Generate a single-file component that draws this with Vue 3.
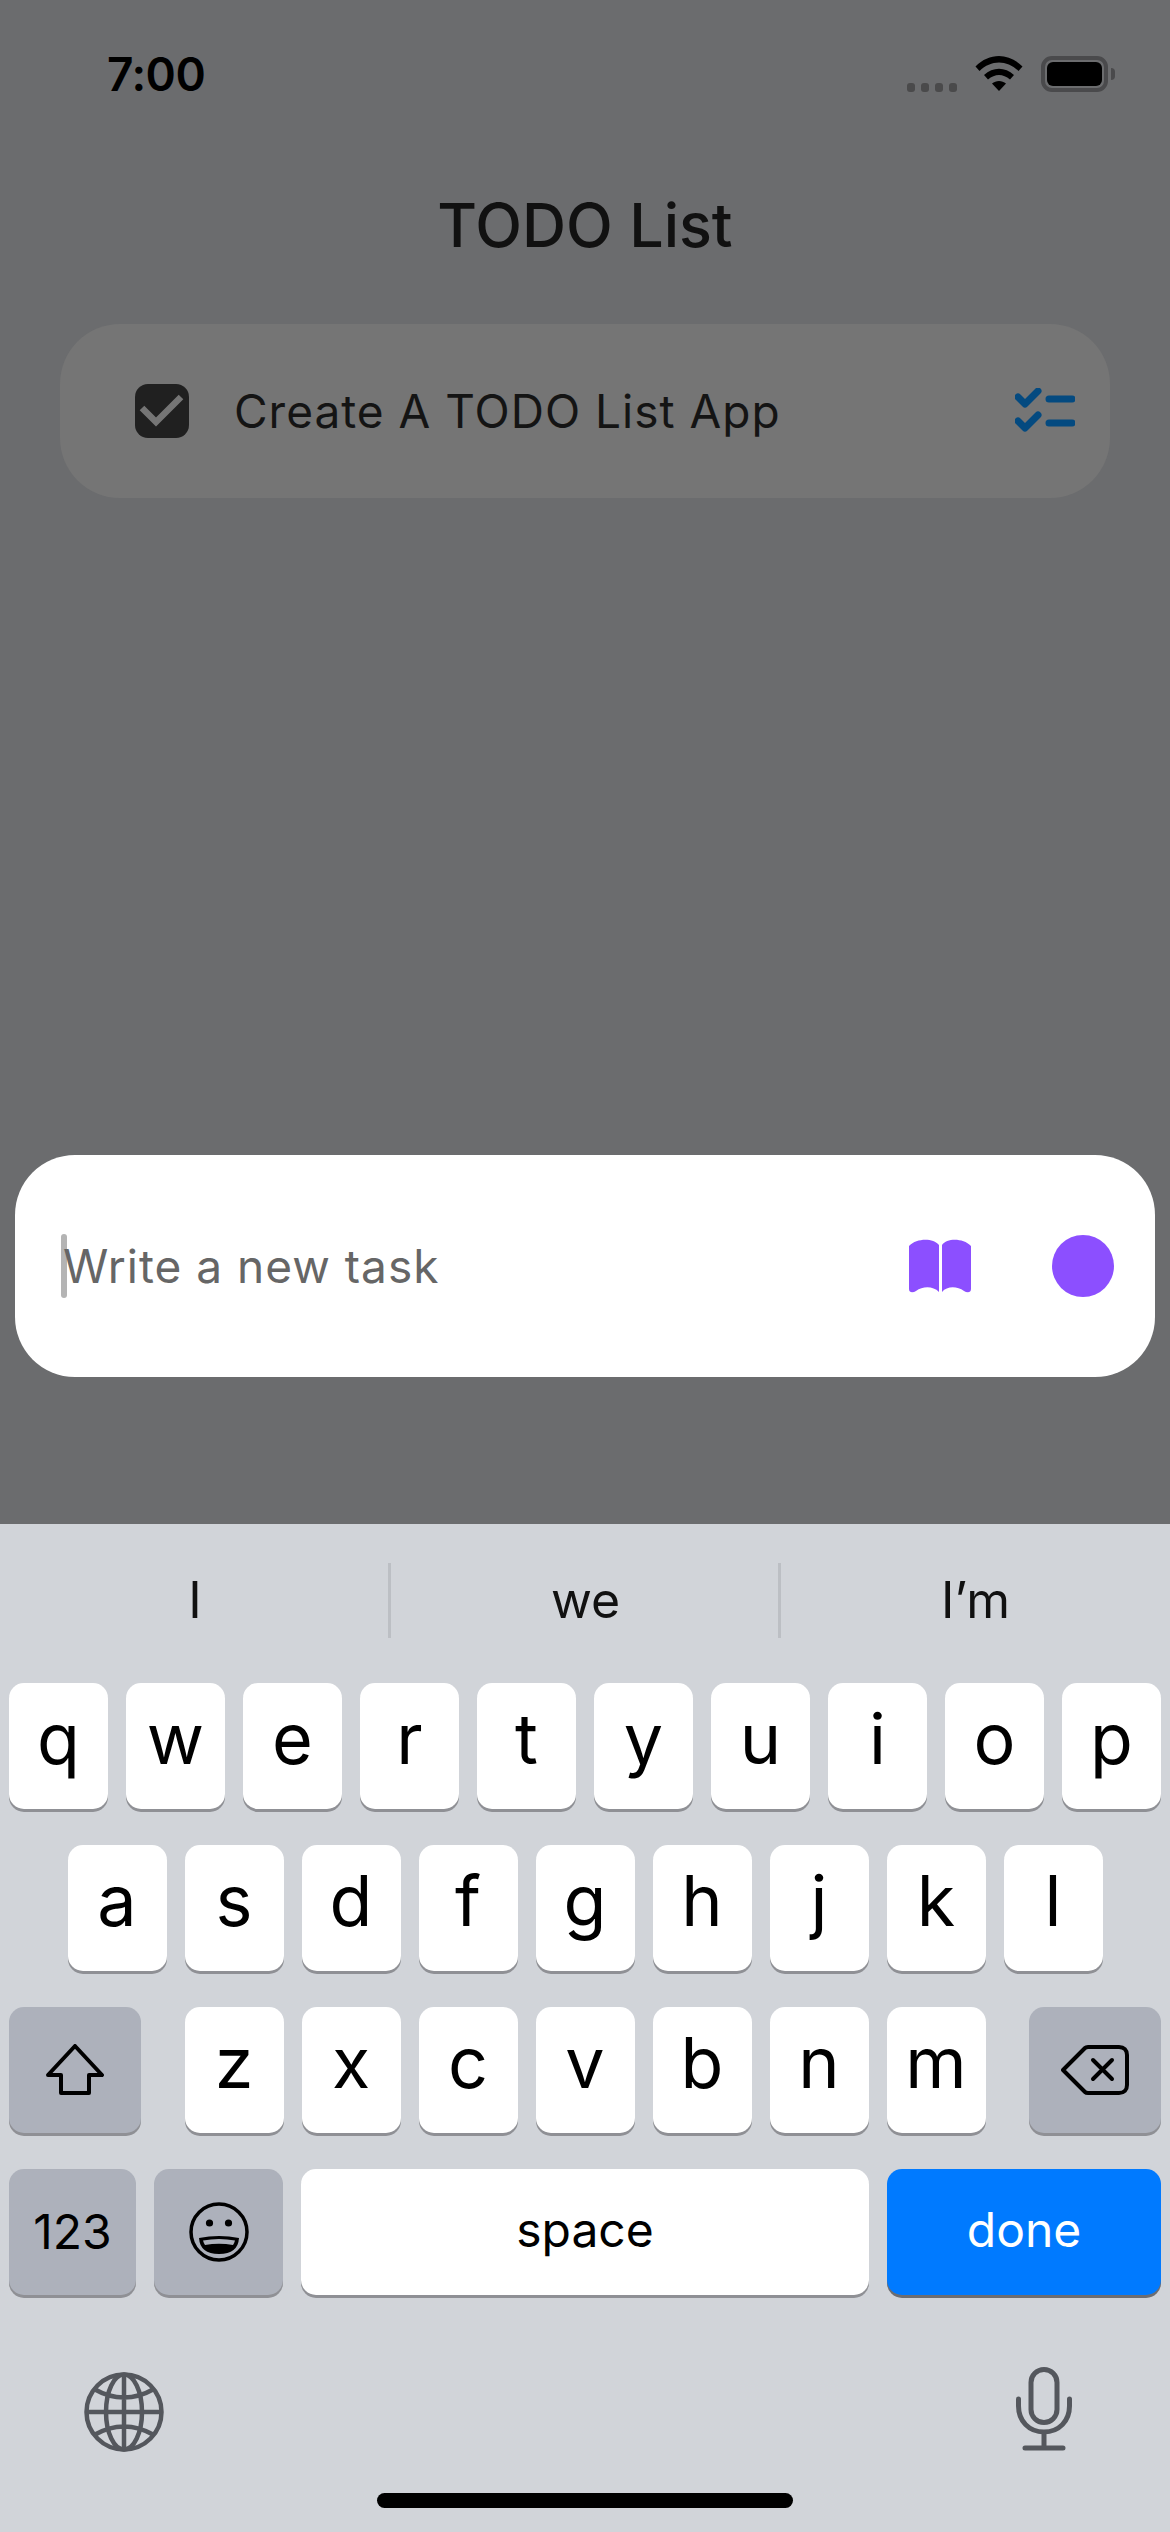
<script setup>
const row1 = ['q','w','e','r','t','y','u','i','o','p']
const row2 = ['a','s','d','f','g','h','j','k','l']
const row3 = ['z','x','c','v','b','n','m']
const suggestions = ['I','we','I’m']
</script>

<template>
  <div class="screen">
    <div class="app">
      <div class="status">
        <span class="time">7:00</span>
        <div class="status-icons">
          <div class="signal"><i></i><i></i><i></i><i></i></div>
          <svg class="wifi" width="48" height="36" viewBox="0 0 48 36">
            <path d="M0.5 11.5C14 -2.5 34 -2.5 47.5 11.5L43.5 16C32 4.5 16 4.5 4.5 16Z" fill="#000"/>
            <path d="M9 20C18 11.5 30 11.5 39 20L35 24.5C28 18.5 20 18.5 13 24.5Z" fill="#000"/>
            <path d="M17 28.5C21 25 27 25 31 28.5L24 36Z" fill="#000"/>
          </svg>
          <div class="battery"><div class="level"></div></div>
          <div class="nub"></div>
        </div>
      </div>
      <h1 class="title">TODO List</h1>
      <div class="task">
        <svg class="check" width="54" height="54" viewBox="0 0 54 54">
          <rect width="54" height="54" rx="13" fill="#202020"/>
          <path d="M7 24L21 38L46 13" fill="none" stroke="#757575" stroke-width="6.5"/>
        </svg>
        <span class="task-text">Create A TODO List App</span>
        <svg class="list-icon" width="60" height="44" viewBox="0 0 60 44">
          <path d="M3 9L10 16L23 3M3 33L10 40L23 27M34 11H57M34 35H57" fill="none" stroke="#044a80" stroke-width="7" stroke-linecap="round" stroke-linejoin="round"/>
        </svg>
      </div>
      <div class="spacer"></div>
      <div class="composer">
        <div class="field">
          <span class="caret"></span>
          <span class="placeholder">Write a new task</span>
        </div>
        <svg class="book" width="62" height="54" viewBox="0 0 62 54">
          <path d="M0 7C8 -1 24 -1 30 6V53C24 47 14 47 7 52C4 54 0 54 0 50Z" fill="#8c4fff"/>
          <path d="M62 7C54 -1 38 -1 33 6V53C38 47 48 47 55 52C58 54 62 54 62 50Z" fill="#8c4fff"/>
        </svg>
        <span class="record"></span>
      </div>
    </div>

    <div class="keyboard">
      <div class="suggestions">
        <span v-for="s in suggestions" :key="s" class="suggestion">{{ s }}</span>
      </div>
      <div class="rows">
        <div class="row">
          <button v-for="k in row1" :key="k" class="key letter">{{ k }}</button>
        </div>
        <div class="row">
          <button v-for="k in row2" :key="k" class="key letter">{{ k }}</button>
        </div>
        <div class="row between">
          <button class="key dark wide" aria-label="shift">
            <svg width="60" height="52" viewBox="0 0 60 52">
              <path d="M30 2L57 31H44V49H16V31H3Z" fill="none" stroke="#000" stroke-width="4" stroke-linejoin="round"/>
            </svg>
          </button>
          <div class="row">
            <button v-for="k in row3" :key="k" class="key letter">{{ k }}</button>
          </div>
          <button class="key dark wide" aria-label="delete">
            <svg width="68" height="50" viewBox="0 0 68 50">
              <path d="M2 25L24 3C25 2 26 2 27 2H58C63 2 66 5 66 10V40C66 45 63 48 58 48H27C26 48 25 48 24 47Z" fill="none" stroke="#000" stroke-width="4" stroke-linejoin="round"/>
              <path d="M32 15L51 34M51 15L32 34" fill="none" stroke="#000" stroke-width="4" stroke-linecap="round"/>
            </svg>
          </button>
        </div>
        <div class="row">
          <button class="key dark small num">123</button>
          <button class="key dark emoji" aria-label="emoji">
            <svg width="60" height="60" viewBox="0 0 60 60">
              <circle cx="30" cy="30" r="28" fill="none" stroke="#000" stroke-width="3.5"/>
              <circle cx="20.5" cy="21" r="3.6" fill="#000"/>
              <circle cx="39.5" cy="21" r="3.6" fill="#000"/>
              <path d="M10 36Q30 32 50 36Q49 52 30 52Q11 52 10 36Z" fill="#000"/>
              <path d="M14 38.5Q30 35.5 46 38.5Q45 42 44 43Q30 40.5 16 43Q15 42 14 38.5Z" fill="#adb1bb"/>
            </svg>
          </button>
          <button class="key space">space</button>
          <button class="key done">done</button>
        </div>
      </div>
      <div class="foot">
        <svg class="globe" width="80" height="80" viewBox="0 0 80 80" fill="none" stroke="#54575d" stroke-width="4.5">
          <circle cx="40" cy="40" r="37.5"/>
          <ellipse cx="40" cy="40" rx="18" ry="37.5"/>
          <path d="M40 2.5V77.5M2.5 40H77.5M10 17Q40 34 70 17M10 63Q40 46 70 63"/>
        </svg>
        <svg class="mic" width="56" height="84" viewBox="0 0 56 84" fill="none" stroke="#54575d" stroke-width="5" stroke-linecap="round">
          <rect x="15" y="2.5" width="26" height="53" rx="13"/>
          <path d="M2.5 32V39C2.5 54 13 65 28 65C43 65 53.5 54 53.5 39V32M28 65V81M9 81H47"/>
        </svg>
      </div>
      <div class="home"></div>
    </div>
  </div>
</template>

<style scoped>
.screen {
  width: 1170px;
  height: 2532px;
  display: flex;
  flex-direction: column;
  overflow: hidden;
  font-family: Inter, "Liberation Sans", sans-serif;
}
.app {
  height: 1524px;
  flex: none;
  background: #6b6c6e;
  display: flex;
  flex-direction: column;
}
.status {
  height: 92px;
  padding: 56px 55px 0 107px;
  display: flex;
  justify-content: space-between;
  align-items: flex-start;
  flex: none;
}
.time {
  font-size: 46px;
  font-weight: 600;
  line-height: 36px;
  letter-spacing: -0.5px;
  color: #000;
}
.status-icons {
  display: flex;
  align-items: flex-start;
}
.signal {
  display: flex;
  gap: 6px;
  margin: 27px 18px 0 0;
}
.signal i {
  width: 8px;
  height: 9px;
  border-radius: 3px;
  background: #4a4a4b;
}
.wifi {
  margin-top: -1px;
}
.battery {
  width: 67px;
  height: 36px;
  box-sizing: border-box;
  margin-left: 18px;
  padding: 2px;
  border: 4px solid #4a4a4c;
  border-radius: 11px;
}
.level {
  width: 100%;
  height: 100%;
  background: #000;
  border-radius: 6px;
}
.nub {
  width: 4px;
  height: 12px;
  margin: 12px 0 0 3px;
  background: #4a4a4c;
  border-radius: 0 6px 6px 0;
}
.title {
  margin: 0;
  height: 176px;
  font-size: 61px;
  font-weight: 500;
  line-height: 154px;
  text-align: center;
  color: #111;
}
.task {
  height: 174px;
  margin: 0 60px;
  padding: 0 35px 0 75px;
  box-sizing: border-box;
  display: flex;
  align-items: center;
  background: #757575;
  border-radius: 60px;
  flex: none;
}
.task-text {
  margin-left: 45px;
  flex: 1;
  font-size: 46px;
  letter-spacing: 1px;
  color: #141414;
}
.list-icon {
  margin-top: -3px;
}
.spacer {
  flex: 1;
}
.composer {
  height: 222px;
  margin: 0 15px 147px;
  padding: 0 41px 0 46px;
  box-sizing: border-box;
  display: flex;
  align-items: center;
  background: #fff;
  border-radius: 60px;
  flex: none;
}
.field {
  flex: 1;
  display: flex;
  align-items: center;
}
.caret {
  width: 6px;
  height: 64px;
  background: #b4b4b4;
  border-radius: 3px;
}
.placeholder {
  margin-left: -4px;
  font-size: 46px;
  letter-spacing: 1px;
  color: #666;
}
.book {
  margin-right: 81px;
}
.record {
  width: 62px;
  height: 62px;
  border-radius: 50%;
  background: #8c4fff;
}
.keyboard {
  flex: 1;
  background: #d1d4d9;
}
.suggestions {
  height: 159px;
  display: grid;
  grid-template-columns: repeat(3, 1fr);
  align-items: start;
}
.suggestion {
  height: 75px;
  line-height: 75px;
  margin-top: 39px;
  margin-left: -2px;
  text-align: center;
  font-size: 50px;
  color: #111;
  border-left: 3px solid #bcbfc4;
}
.suggestion:first-child {
  margin-left: 0;
  border-left: 0;
}
.rows {
  display: flex;
  flex-direction: column;
  gap: 36px;
  padding: 0 9px;
}
.row {
  display: flex;
  justify-content: center;
  gap: 18px;
}
.row.between {
  justify-content: space-between;
  gap: 0;
}
.key {
  height: 126px;
  padding: 0;
  border: 0;
  border-radius: 15px;
  box-shadow: 0 3px 0 #8f9095;
  background: #fff;
  color: #000;
  font-family: inherit;
  display: flex;
  align-items: center;
  justify-content: center;
  flex: none;
}
.letter {
  width: 99px;
  padding-bottom: 16px;
  font-size: 70px;
  font-weight: 400;
}
.dark {
  background: #adb1bb;
}
.wide {
  width: 132px;
}
.small {
  width: 127px;
}
.num {
  font-size: 48px;
  padding-bottom: 2px;
}
.emoji {
  width: 129px;
}
.space {
  width: 568px;
  padding-bottom: 5px;
  font-size: 48px;
}
.done {
  width: 274px;
  padding-bottom: 5px;
  font-size: 48px;
  color: #fff;
  background: #007aff;
  box-shadow: 0 3px 0 #6c6d72;
}
.foot {
  height: 84px;
  margin-top: 72px;
  padding: 0 98px 0 84px;
  display: flex;
  justify-content: space-between;
  align-items: flex-start;
}
.globe {
  margin-top: 5px;
}
.home {
  width: 416px;
  height: 15px;
  margin: 42px auto 0;
  background: #000;
  border-radius: 8px;
}
</style>
